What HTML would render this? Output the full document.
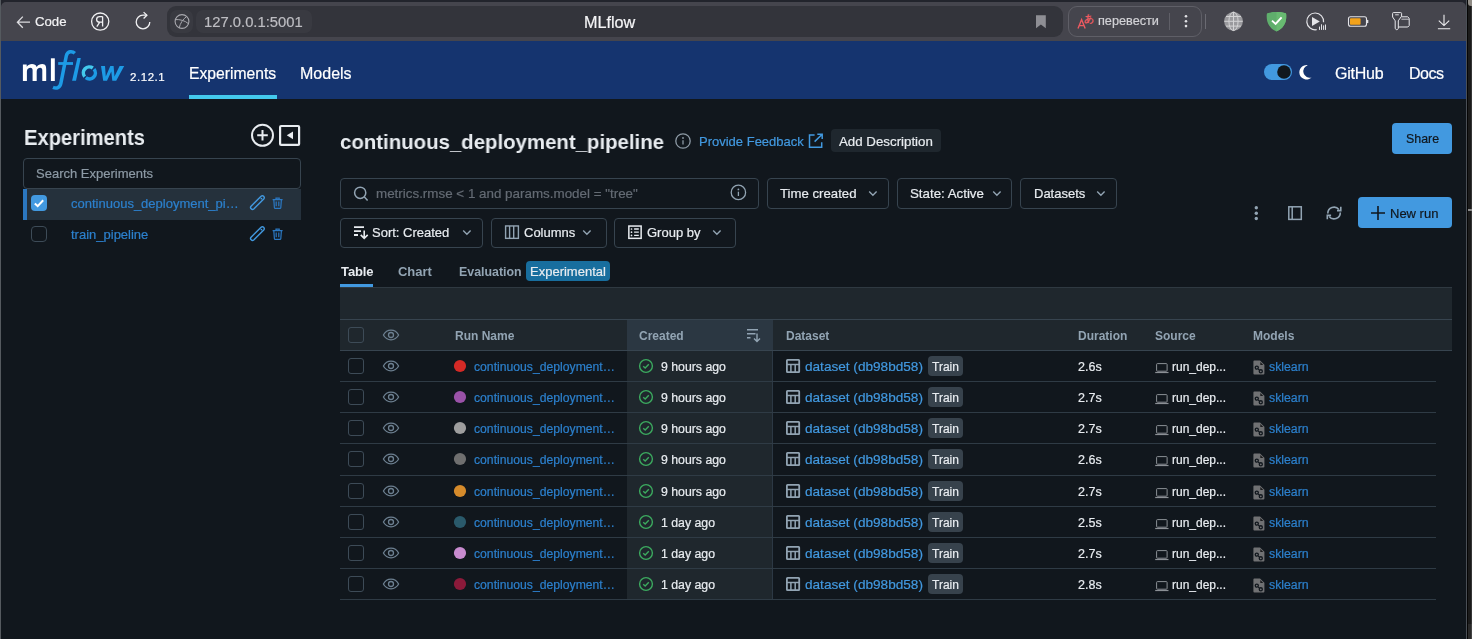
<!DOCTYPE html>
<html><head><meta charset="utf-8">
<style>
*{box-sizing:border-box;margin:0;padding:0}
html,body{width:1472px;height:639px;overflow:hidden;background:#11171d;font-family:"Liberation Sans",sans-serif}
.a{position:absolute}
.t{position:absolute;line-height:1;white-space:nowrap;will-change:transform}
svg.a{overflow:visible}
</style></head><body>
<div class="a" style="left:0px;top:0px;width:1472px;height:639px;background:#11171d"></div>
<div class="a" style="left:0px;top:0px;width:1467px;height:14px;background:#22242c"></div>
<div class="a" style="left:1467px;top:0px;width:5px;height:639px;background:#1b1b1b"></div>
<div class="a" style="left:1467px;top:0px;width:1px;height:639px;background:#060606"></div>
<div class="a" style="left:1471px;top:0px;width:1px;height:639px;background:#363636"></div>
<div class="a" style="left:1468px;top:209px;width:4px;height:2px;background:#8a8a8a"></div>
<div class="a" style="left:1468px;top:624px;width:3px;height:15px;background:#2a2a2a"></div>
<div class="a" style="left:1471px;top:624px;width:1px;height:15px;background:#444"></div>
<div class="a" style="left:1468px;top:0px;width:4px;height:6px;background:#8f8b85;border-bottom-left-radius:3px"></div>
<div class="a" style="left:1px;top:2px;width:1465px;height:39px;background:#45454d;border-top-left-radius:5px;border-top-right-radius:5px"></div>
<div class="a" style="left:1px;top:41px;width:1465px;height:58px;background:#15346f"></div>
<div class="a" style="left:0px;top:0px;width:1px;height:639px;background:#555a5f"></div>
<div class="a" style="left:1466px;top:0px;width:1px;height:639px;background:#4a4f56"></div>
<svg class="a" style="left:0px;top:0px;" width="170" height="41" viewBox="0 0 170 41">
<path d="M30 22.2H17.6M22.8 16.6L17.4 22.2L22.8 27.8" fill="none" stroke="#dcdce0" stroke-width="1.3"/>
<circle cx="100.2" cy="21.6" r="8.6" fill="none" stroke="#f0f0f2" stroke-width="1.3"/>
<path d="M102.6 16.6V26.6M102.6 16.6H99.8C97.6 16.6 96.6 17.9 96.6 19.4C96.6 20.9 97.6 22.1 99.8 22.1H102.6M99.8 22.1L96.8 26.6" fill="none" stroke="#f0f0f2" stroke-width="1.3"/>
<path d="M149.8 22A6.8 6.8 0 1 1 143 15.2H146.6" fill="none" stroke="#f0f0f2" stroke-width="1.3"/>
<path d="M143.6 12.1L146.9 15.2L143.6 18.5" fill="none" stroke="#f0f0f2" stroke-width="1.3"/>
</svg>
<div class="t" style="left:35.20px;top:15.03px;font-size:13.2px;color:#f2f2f4;-webkit-text-stroke:0.2px">Code</div>
<div class="a" style="left:167px;top:6px;width:896px;height:31px;background:#33343b;border-radius:9px"></div>
<div class="a" style="left:170px;top:10px;width:23px;height:23px;background:#393a41;border-radius:7px"></div>
<div class="a" style="left:196px;top:10px;width:116px;height:23px;background:#393a41;border-radius:7px"></div>
<svg class="a" style="left:0px;top:0px;" width="200" height="41" viewBox="0 0 200 41">
<circle cx="182" cy="21.5" r="6.9" fill="none" stroke="#a8a8ae" stroke-width="1.1"/>
<path d="M175.4 19.6C179.5 19.2 185 20.5 188.6 23.8M186.8 16.4C183 19 180 23.5 179.2 28" fill="none" stroke="#a8a8ae" stroke-width="1"/>
</svg>
<div class="t" style="left:204.00px;top:15.27px;font-size:14.8px;color:#bdbdc2;-webkit-text-stroke:0.2px">127.0.0.1:5001</div>
<div class="t" style="left:584.20px;top:14.09px;font-size:16.2px;color:#f4f4f6;-webkit-text-stroke:0.2px">MLflow</div>
<svg class="a" style="left:1030px;top:10px;" width="20" height="22" viewBox="0 0 20 22"><path d="M6 5.2H15.8V18.2L10.9 14.4L6 18.2Z" fill="#8e8e94"/></svg>
<div class="a" style="left:1068px;top:6px;width:134px;height:31px;border:1px solid #5f5f67;border-radius:9px"></div>
<svg class="a" style="left:1070px;top:8px;" width="30" height="28" viewBox="0 0 30 28">
<path d="M8 20.6L11.6 11.6L15.2 20.6M9.3 17.6H13.9" fill="none" stroke="#ec5a61" stroke-width="1.4"/>
<text x="14.4" y="14.2" font-size="9.5" font-family="Liberation Sans" font-weight="bold" fill="#ec5a61">あ</text>
</svg>
<div class="t" style="left:1097.50px;top:15.15px;font-size:12.7px;color:#d2d2d6;-webkit-text-stroke:0.2px">перевести</div>
<div class="a" style="left:1169px;top:13px;width:1px;height:17px;background:#5f5f67"></div>
<svg class="a" style="left:1180px;top:10px;" width="12" height="22" viewBox="0 0 12 22"><circle cx="6" cy="6.3" r="1.3" fill="#e0e0e4"/><circle cx="6" cy="11.2" r="1.3" fill="#e0e0e4"/><circle cx="6" cy="16.1" r="1.3" fill="#e0e0e4"/></svg>
<div class="a" style="left:1205px;top:14px;width:1px;height:15px;background:#6a6a72"></div>
<svg class="a" style="left:1220px;top:8px;" width="28" height="28" viewBox="0 0 28 28">
<circle cx="13.5" cy="13.3" r="9.4" fill="#9a9a9e"/>
<path d="M4.4 13.3H22.6M6 8.5H21M6 18.1H21M13.5 4V22.6" stroke="#d4d4d6" stroke-width="1" fill="none"/>
<ellipse cx="13.5" cy="13.3" rx="4.6" ry="9.3" fill="none" stroke="#d4d4d6" stroke-width="1"/>
</svg>
<svg class="a" style="left:1264px;top:9.8px;" width="26" height="26" viewBox="0 0 26 26">
<path d="M3.2 3.2C6.5 2.2 9.5 1.9 12.5 2C15.5 1.9 18.5 2.2 21.8 3.2C22.6 4 22.4 9.5 21.5 12C20 16.5 17 19.5 12.5 21.4C8 19.5 5 16.5 3.5 12C2.6 9.5 2.4 4 3.2 3.2Z" fill="#5fae6c"/>
<path d="M12.5 2C15.5 1.9 18.5 2.2 21.8 3.2C22.6 4 22.4 9.5 21.5 12C20 16.5 17 19.5 12.5 21.4Z" fill="#68ba71"/>
<path d="M8 10.6L11.6 13.9L17.6 7.4" fill="none" stroke="#fff" stroke-width="1.9"/>
</svg>
<svg class="a" style="left:1304px;top:9px;" width="26" height="26" viewBox="0 0 26 26">
<path d="M19.55 13.28A8.4 8.4 0 1 0 12.66 20.67" fill="none" stroke="#e4e4e8" stroke-width="1.2"/>
<path d="M8 8L15.8 12.5L8 17Z" fill="#e4e4e8"/>
<path d="M15.5 20.9V17.6M17.5 20.9V15.3M19.6 20.9V16.4M21.5 20.9V15.5" stroke="#e4e4e8" stroke-width="1"/>
</svg>
<svg class="a" style="left:1345px;top:13px;" width="28" height="18" viewBox="0 0 28 18">
<rect x="3.5" y="3.8" width="18" height="9.4" rx="2" fill="none" stroke="#e4e4e8" stroke-width="1.1"/>
<rect x="5" y="5.3" width="10.6" height="6.4" rx="0.8" fill="#f2a21b"/>
<path d="M22.5 6.9V10.1" stroke="#e4e4e8" stroke-width="1.6"/>
</svg>
<svg class="a" style="left:1390px;top:10px;" width="24" height="24" viewBox="0 0 24 24">
<path d="M3.4 2.6H10.7Q11.6 2.6 11.6 3.5V6.2L8.3 10.8V18.6L7.2 19.6H6.3L5.2 18.6V10.8L2.6 7V3.5Q2.6 2.6 3.4 2.6Z" fill="none" stroke="#eaeaee" stroke-width="1"/>
<path d="M5.2 4.8H8.8" stroke="#eaeaee" stroke-width="0.9"/>
<path d="M11.6 6.8H17.6L19.2 8.3V15.6L17.8 17H8.3" fill="none" stroke="#eaeaee" stroke-width="1"/>
<path d="M11.4 9.2H19.1" stroke="#c6c6ca" stroke-width="1"/>
</svg>
<svg class="a" style="left:1434px;top:10px;" width="20" height="22" viewBox="0 0 20 22">
<path d="M10 4.7V15.2M4.8 10.7L10 15.6L15.2 10.7M3.9 18.7H16.2" fill="none" stroke="#eeeef0" stroke-width="1.1"/>
</svg>
<svg class="a" style="left:20px;top:48px;" width="110" height="45" viewBox="0 0 110 45">
<path d="M2.9 33V16.5H6.7V18.7C8 17 9.8 16.1 12 16.1C14.3 16.1 15.9 17.1 16.7 18.9C18 17 20 16.1 22.3 16.1C25.9 16.1 26.2 19 26.2 21.5V33H22.3V22.3C22.3 20.5 21.6 19.7 20.2 19.7C18.3 19.7 16.7 20.9 16.7 23.4V33H12.6V22.3C12.6 20.5 11.9 19.7 10.5 19.7C8.6 19.7 6.9 20.9 6.9 23.4V33Z" fill="#fff"/>
<rect x="30.9" y="10.3" width="3.9" height="22.7" fill="#fff"/>
<path d="M54.8 5.2C52.5 3 47.6 2.6 46.3 7.8L40.9 35.2C40 39.8 36.5 40.8 33 39.3" fill="none" stroke="#1d9be6" stroke-width="3.5"/><path d="M38.2 15.5H53" stroke="#1d9be6" stroke-width="2.8"/>
<path d="M57.4 10L60.8 10L56 32.7L52.1 32.7Z" fill="#1d9be6"/>
<path d="M64.67 28.6A6 6 0 0 1 72.84 19.98" fill="none" stroke="#43c9ed" stroke-width="3.5"/>
<path d="M74 21.04A6 6 0 0 1 65.79 29.69" fill="none" stroke="#1d9be6" stroke-width="3.5"/>
<path d="M81 18H85L85.8 28.5L90.3 18H93.6L94.5 28.5L99.6 18H104.2L96.2 32.7H92.3L91.3 23.5L87 32.7H83.2Z" fill="#1d9be6"/>
</svg>
<div class="t" style="left:129.70px;top:72.27px;font-size:11.5px;color:#fff;-webkit-text-stroke:0.2px;letter-spacing:0.55px">2.12.1</div>
<div class="t" style="left:189.20px;top:66.41px;font-size:15.7px;color:#fff;-webkit-text-stroke:0.2px">Experiments</div>
<div class="a" style="left:189px;top:95px;width:88px;height:4px;background:#43c9ed"></div>
<div class="t" style="left:300.20px;top:66.16px;font-size:16px;color:#fff;-webkit-text-stroke:0.2px">Models</div>
<div class="a" style="left:1264px;top:64px;width:28px;height:16px;background:#4299e0;border-radius:8px"></div>
<svg class="a" style="left:1264px;top:64px;" width="28" height="16" viewBox="0 0 28 16"><circle cx="20" cy="8" r="6.8" fill="#11171d"/></svg>
<svg class="a" style="left:1296px;top:62px;" width="20" height="20" viewBox="0 0 20 20"><path d="M11.8 3.2A7.2 7.2 0 1 0 15.6 15.4A6 6 0 0 1 11.8 3.2Z" fill="#fff"/></svg>
<div class="t" style="left:1335.20px;top:66.16px;font-size:16px;color:#fff;-webkit-text-stroke:0.2px;letter-spacing:-0.25px">GitHub</div>
<div class="t" style="left:1408.50px;top:66.16px;font-size:16px;color:#fff;-webkit-text-stroke:0.2px;letter-spacing:-0.5px">Docs</div>
<div class="t" style="left:24.40px;top:126.98px;font-size:22px;color:#e8ecf0;transform:scaleX(0.916);transform-origin:0 0;font-weight:bold">Experiments</div>
<svg class="a" style="left:245px;top:118px;" width="60" height="36" viewBox="0 0 60 36">
<circle cx="17.5" cy="17.3" r="10.5" fill="none" stroke="#e8ecf0" stroke-width="2"/>
<path d="M17.5 12V22.6M12.2 17.3H22.8" stroke="#e8ecf0" stroke-width="2"/>
<rect x="35.1" y="8" width="19" height="18.9" rx="1" fill="none" stroke="#e8ecf0" stroke-width="2.2"/>
<path d="M48 13.4V21.2L41.8 17.3Z" fill="#e8ecf0"/>
</svg>
<div class="a" style="left:23px;top:158px;width:278px;height:31px;border:1px solid #37444f;border-radius:4px"></div>
<div class="t" style="left:36.30px;top:167.20px;font-size:13px;color:#8d9aa5;-webkit-text-stroke:0.2px">Search Experiments</div>
<div class="a" style="left:23px;top:189px;width:278px;height:31px;background:#25313c"></div>
<div class="a" style="left:23px;top:189px;width:4px;height:31px;background:#2b77c0"></div>
<div class="a" style="left:31px;top:195px;width:16px;height:16px;background:#4299e0;border-radius:4px"></div>
<svg class="a" style="left:31px;top:195px;" width="16" height="16" viewBox="0 0 16 16"><path d="M3.8 8.4L6.7 11.1L12.2 5.2" fill="none" stroke="#fff" stroke-width="2"/></svg>
<div class="t" style="left:70.60px;top:197.40px;font-size:13px;color:#2c80cd;-webkit-text-stroke:0.2px">continuous_deployment_pi…</div>
<div class="a" style="left:31px;top:226px;width:16px;height:16px;border:1px solid #3d4b57;border-radius:4px"></div>
<div class="t" style="left:70.60px;top:228.40px;font-size:13px;color:#2c80cd;-webkit-text-stroke:0.2px">train_pipeline</div>
<svg class="a" style="left:249px;top:194.5px;" width="16" height="16" viewBox="0 0 16 16"><path d="M4.74 13.94L14.74 3.94A1.9 1.9 0 0 0 12.06 1.26L2.06 11.26A1.9 1.9 0 0 0 4.74 13.94Z" fill="none" stroke="#4299e0" stroke-width="1.4"/><circle cx="12.4" cy="3.6" r="0.9" fill="#4299e0"/></svg>
<svg class="a" style="left:272px;top:197px;" width="12" height="12" viewBox="0 0 12 12"><path d="M0.6 2.6H10.6M4 2.6V1.2H7.2V2.6M1.8 2.6L2.4 10.6Q2.5 11.3 3.2 11.3H8Q8.7 11.3 8.8 10.6L9.4 2.6M4.2 4.6V9.2M6.8 4.6V9.2" fill="none" stroke="#2b78c2" stroke-width="1.2"/></svg>
<svg class="a" style="left:249px;top:225.5px;" width="16" height="16" viewBox="0 0 16 16"><path d="M4.74 13.94L14.74 3.94A1.9 1.9 0 0 0 12.06 1.26L2.06 11.26A1.9 1.9 0 0 0 4.74 13.94Z" fill="none" stroke="#4299e0" stroke-width="1.4"/><circle cx="12.4" cy="3.6" r="0.9" fill="#4299e0"/></svg>
<svg class="a" style="left:272px;top:228px;" width="12" height="12" viewBox="0 0 12 12"><path d="M0.6 2.6H10.6M4 2.6V1.2H7.2V2.6M1.8 2.6L2.4 10.6Q2.5 11.3 3.2 11.3H8Q8.7 11.3 8.8 10.6L9.4 2.6M4.2 4.6V9.2M6.8 4.6V9.2" fill="none" stroke="#2b78c2" stroke-width="1.2"/></svg>
<div class="t" style="left:340.40px;top:130.62px;font-size:21px;color:#e8ecf0;transform:scaleX(0.971);transform-origin:0 0;font-weight:bold">continuous_deployment_pipeline</div>
<svg class="a" style="left:670px;top:130px;" width="26" height="24" viewBox="0 0 26 24"><circle cx="13" cy="11" r="7.2" fill="none" stroke="#8d9aa5" stroke-width="1.3"/><circle cx="13" cy="7.98" r="0.9" fill="#8d9aa5"/><path d="M13 10.28V14.60" stroke="#8d9aa5" stroke-width="1.3"/></svg>
<div class="t" style="left:698.80px;top:134.60px;font-size:13px;color:#4299e0;-webkit-text-stroke:0.2px">Provide Feedback</div>
<svg class="a" style="left:806px;top:132px;" width="20" height="18" viewBox="0 0 20 18"><path d="M8.6 3H3.5V15.2H15.7V10.2" fill="none" stroke="#4299e0" stroke-width="1.5"/><path d="M8.6 9.6L16.2 2.2M11.3 2.2H16.2V7.1" fill="none" stroke="#4299e0" stroke-width="1.5"/></svg>
<div class="a" style="left:831px;top:129px;width:110px;height:23px;background:#1f272e;border-radius:4px"></div>
<div class="t" style="left:839.30px;top:135.34px;font-size:13.3px;color:#e8ecf0;-webkit-text-stroke:0.2px">Add Description</div>
<div class="a" style="left:1392px;top:123px;width:60px;height:31px;background:#4299e0;border-radius:4px"></div>
<div class="t" style="left:1405.70px;top:132.90px;font-size:12.4px;color:#11171d;-webkit-text-stroke:0.2px">Share</div>
<div class="a" style="left:340px;top:178px;width:419px;height:31px;border:1px solid #37444f;border-radius:4px"></div>
<svg class="a" style="left:350px;top:183px;" width="22" height="22" viewBox="0 0 22 22"><circle cx="10.2" cy="9.8" r="5.6" fill="none" stroke="#92a4b3" stroke-width="1.5"/><path d="M14.2 13.8L17.6 17.4" stroke="#92a4b3" stroke-width="1.5"/></svg>
<div class="t" style="left:376.40px;top:186.56px;font-size:13.4px;color:#646b74;-webkit-text-stroke:0.2px">metrics.rmse &lt; 1 and params.model = "tree"</div>
<svg class="a" style="left:726px;top:180px;" width="26" height="26" viewBox="0 0 26 26"><circle cx="12.4" cy="12.4" r="7.2" fill="none" stroke="#92a4b3" stroke-width="1.3"/><circle cx="12.4" cy="9.38" r="0.9" fill="#92a4b3"/><path d="M12.4 11.68V16.00" stroke="#92a4b3" stroke-width="1.3"/></svg>
<div class="a" style="left:767px;top:178px;width:122px;height:31px;border:1px solid #37444f;border-radius:4px"></div>
<div class="t" style="left:780.10px;top:186.63px;font-size:13.2px;color:#e8ecf0;-webkit-text-stroke:0.2px">Time created</div>
<svg class="a" style="left:868.0px;top:189.5px;" width="10" height="8" viewBox="0 0 10 8"><path d="M1.2 1.6L4.9 5.2L8.6 1.6" fill="none" stroke="#92a4b3" stroke-width="1.4"/></svg>
<div class="a" style="left:897px;top:178px;width:115px;height:31px;border:1px solid #37444f;border-radius:4px"></div>
<div class="t" style="left:909.60px;top:186.54px;font-size:13.3px;color:#e8ecf0;-webkit-text-stroke:0.2px">State: Active</div>
<svg class="a" style="left:991.9px;top:189.5px;" width="10" height="8" viewBox="0 0 10 8"><path d="M1.2 1.6L4.9 5.2L8.6 1.6" fill="none" stroke="#92a4b3" stroke-width="1.4"/></svg>
<div class="a" style="left:1020px;top:178px;width:97px;height:31px;border:1px solid #37444f;border-radius:4px"></div>
<div class="t" style="left:1033.50px;top:186.80px;font-size:13px;color:#e8ecf0;-webkit-text-stroke:0.2px">Datasets</div>
<svg class="a" style="left:1096.3000000000002px;top:189.5px;" width="10" height="8" viewBox="0 0 10 8"><path d="M1.2 1.6L4.9 5.2L8.6 1.6" fill="none" stroke="#92a4b3" stroke-width="1.4"/></svg>
<div class="a" style="left:340px;top:218px;width:143px;height:30px;border:1px solid #37444f;border-radius:4px"></div>
<div class="t" style="left:372.40px;top:225.60px;font-size:13px;color:#e8ecf0;-webkit-text-stroke:0.2px">Sort: Created</div>
<svg class="a" style="left:462.09999999999997px;top:229.2px;" width="10" height="8" viewBox="0 0 10 8"><path d="M1.2 1.6L4.9 5.2L8.6 1.6" fill="none" stroke="#92a4b3" stroke-width="1.4"/></svg>
<div class="a" style="left:491px;top:218px;width:116px;height:30px;border:1px solid #37444f;border-radius:4px"></div>
<div class="t" style="left:523.80px;top:225.60px;font-size:13px;color:#e8ecf0;-webkit-text-stroke:0.2px">Columns</div>
<svg class="a" style="left:582.1px;top:229.2px;" width="10" height="8" viewBox="0 0 10 8"><path d="M1.2 1.6L4.9 5.2L8.6 1.6" fill="none" stroke="#92a4b3" stroke-width="1.4"/></svg>
<div class="a" style="left:614px;top:218px;width:122px;height:30px;border:1px solid #37444f;border-radius:4px"></div>
<div class="t" style="left:647.00px;top:225.60px;font-size:13px;color:#e8ecf0;-webkit-text-stroke:0.2px">Group by</div>
<svg class="a" style="left:711.9px;top:229.2px;" width="10" height="8" viewBox="0 0 10 8"><path d="M1.2 1.6L4.9 5.2L8.6 1.6" fill="none" stroke="#92a4b3" stroke-width="1.4"/></svg>
<svg class="a" style="left:352px;top:224px;" width="18" height="18" viewBox="0 0 18 18"><path d="M2 3.1H12M2 7.1H9M2 11H6" stroke="#e8ecf0" stroke-width="1.9"/><path d="M12.2 6.4V14.4M8.7 10.9L12.2 14.4L15.7 10.9" fill="none" stroke="#e8ecf0" stroke-width="1.6"/></svg>
<svg class="a" style="left:503px;top:224px;" width="18" height="18" viewBox="0 0 18 18"><rect x="2.6" y="1.95" width="12.8" height="12.4" fill="none" stroke="#92a4b3" stroke-width="1.4"/><path d="M6.6 1.95V14.35M10.7 1.95V14.35" stroke="#92a4b3" stroke-width="1.4"/></svg>
<svg class="a" style="left:626px;top:223px;" width="18" height="18" viewBox="0 0 18 18"><rect x="2.85" y="3.05" width="12.3" height="12.3" fill="none" stroke="#e8ecf0" stroke-width="1.5"/><circle cx="5.5" cy="6" r="0.85" fill="#e8ecf0"/><circle cx="5.5" cy="9.2" r="0.85" fill="#e8ecf0"/><circle cx="5.5" cy="12.4" r="0.85" fill="#e8ecf0"/><path d="M8.1 6H12.8M8.1 9.2H12.8M8.1 12.4H12.8" stroke="#e8ecf0" stroke-width="1.3"/></svg>
<svg class="a" style="left:1250px;top:203px;" width="40" height="20" viewBox="0 0 40 20"><circle cx="6.3" cy="4.8" r="1.7" fill="#92a4b3"/><circle cx="6.3" cy="10.2" r="1.7" fill="#92a4b3"/><circle cx="6.3" cy="15.5" r="1.7" fill="#92a4b3"/></svg>
<svg class="a" style="left:1285px;top:203px;" width="20" height="20" viewBox="0 0 20 20"><rect x="3.8" y="3.8" width="12.5" height="12.6" fill="none" stroke="#92a4b3" stroke-width="1.5"/><path d="M7.2 3.8V16.4" stroke="#92a4b3" stroke-width="1.5"/></svg>
<svg class="a" style="left:1324px;top:203px;" width="20" height="20" viewBox="0 0 20 20"><path d="M3.8 10.5A6.2 6.2 0 0 1 14.9 6.6M16.3 9.5A6.2 6.2 0 0 1 5.2 13.4" fill="none" stroke="#92a4b3" stroke-width="1.6"/><path d="M16.8 3.8V7.6H13" fill="none" stroke="#92a4b3" stroke-width="1.6"/><path d="M3.3 16.2V12.4H7.1" fill="none" stroke="#92a4b3" stroke-width="1.6"/></svg>
<div class="a" style="left:1358px;top:197px;width:94px;height:31px;background:#4299e0;border-radius:4px"></div>
<svg class="a" style="left:1368px;top:203px;" width="20" height="20" viewBox="0 0 20 20"><path d="M10 3V17M3 10H17" stroke="#11171d" stroke-width="1.6"/></svg>
<div class="t" style="left:1390.20px;top:207.30px;font-size:13px;color:#11171d;-webkit-text-stroke:0.2px">New run</div>
<div class="t" style="left:340.90px;top:264.60px;font-size:13px;color:#e8ecf0;font-weight:bold;letter-spacing:-0.1px">Table</div>
<div class="t" style="left:398.40px;top:264.60px;font-size:13px;color:#92a4b3;font-weight:bold;letter-spacing:-0.05px">Chart</div>
<div class="t" style="left:458.70px;top:266.10px;font-size:12.4px;color:#92a4b3;font-weight:bold">Evaluation</div>
<div class="a" style="left:526px;top:261px;width:84px;height:20px;background:#186e9e;border-radius:4px"></div>
<div class="t" style="left:530.00px;top:264.60px;font-size:13px;color:#e8ecf0;-webkit-text-stroke:0.2px">Experimental</div>
<div class="a" style="left:340px;top:287px;width:1112px;height:1px;background:#2f3941"></div>
<div class="a" style="left:340px;top:284px;width:33px;height:3px;background:#4299e0"></div>
<div class="a" style="left:340px;top:288px;width:1112px;height:63px;background:#1f272d"></div>
<div class="a" style="left:340px;top:319px;width:1112px;height:1px;background:#37444f"></div>
<div class="a" style="left:627px;top:320px;width:146px;height:30px;background:#2b3742"></div>
<div class="a" style="left:340px;top:350px;width:1112px;height:1px;background:#37444f"></div>
<div class="a" style="left:627px;top:351px;width:145px;height:249px;background:#1f272d"></div>
<div class="a" style="left:772px;top:351px;width:1px;height:249px;background:#2c3844"></div>
<div class="a" style="left:348px;top:327px;width:16px;height:16px;border:1px solid #3d4b57;border-radius:3px"></div>
<svg class="a" style="left:381px;top:328px;" width="20" height="14" viewBox="0 0 20 14"><path d="M2.4 7C4.3 3.5 6.9 2.2 10 2.2C13.1 2.2 15.7 3.5 17.6 7C15.7 10.5 13.1 11.8 10 11.8C6.9 11.8 4.3 10.5 2.4 7Z" fill="none" stroke="#6d8091" stroke-width="1.3" stroke-linejoin="round"/><circle cx="10" cy="7" r="2.5" fill="none" stroke="#6d8091" stroke-width="1.3"/></svg>
<div class="t" style="left:454.60px;top:329.84px;font-size:12px;color:#92a4b3;font-weight:bold">Run Name</div>
<div class="t" style="left:639.40px;top:329.64px;font-size:12px;color:#92a4b3;font-weight:bold">Created</div>
<svg class="a" style="left:744px;top:326px;" width="20" height="18" viewBox="0 0 20 18"><path d="M3 3.8H14M3 7.8H11.5M3 11.8H6.5" stroke="#92a4b3" stroke-width="1.4"/><path d="M13 7.5V15.5M10 12.6L13 15.6L16 12.6" fill="none" stroke="#92a4b3" stroke-width="1.4"/></svg>
<div class="t" style="left:785.70px;top:329.84px;font-size:12px;color:#92a4b3;font-weight:bold">Dataset</div>
<div class="t" style="left:1077.60px;top:329.84px;font-size:12px;color:#92a4b3;font-weight:bold">Duration</div>
<div class="t" style="left:1155.40px;top:329.84px;font-size:12px;color:#92a4b3;font-weight:bold">Source</div>
<div class="t" style="left:1252.60px;top:329.84px;font-size:12px;color:#92a4b3;font-weight:bold">Models</div>
<div class="a" style="left:340px;top:381px;width:1096px;height:1px;background:#2f3b45"></div>
<div class="a" style="left:348px;top:358px;width:16px;height:16px;border:1px solid #3d4b57;border-radius:3px"></div>
<svg class="a" style="left:381px;top:359px;" width="20" height="14" viewBox="0 0 20 14"><path d="M2.4 7C4.3 3.5 6.9 2.2 10 2.2C13.1 2.2 15.7 3.5 17.6 7C15.7 10.5 13.1 11.8 10 11.8C6.9 11.8 4.3 10.5 2.4 7Z" fill="none" stroke="#6d8091" stroke-width="1.3" stroke-linejoin="round"/><circle cx="10" cy="7" r="2.5" fill="none" stroke="#6d8091" stroke-width="1.3"/></svg>
<svg class="a" style="left:452px;top:358px;" width="16" height="16" viewBox="0 0 16 16"><circle cx="8" cy="8" r="6.1" fill="#d42a26"/></svg>
<div class="t" style="left:474.10px;top:360.97px;font-size:12.2px;color:#2c80cd;-webkit-text-stroke:0.2px">continuous_deployment…</div>
<svg class="a" style="left:636px;top:356px;" width="20" height="20" viewBox="0 0 20 20"><circle cx="10" cy="10" r="6.4" fill="none" stroke="#3caa5f" stroke-width="1.4"/><path d="M7.2 10.2L9.2 12L12.8 8.3" fill="none" stroke="#3caa5f" stroke-width="1.4"/></svg>
<div class="t" style="left:660.70px;top:360.89px;font-size:12.3px;color:#e8ecf0;-webkit-text-stroke:0.2px">9 hours ago</div>
<svg class="a" style="left:783px;top:356px;" width="20" height="20" viewBox="0 0 20 20"><rect x="3.9" y="3.9" width="12.3" height="12.3" rx="0.6" fill="none" stroke="#92a4b3" stroke-width="1.8"/><path d="M3.9 8.4H16.2M7.9 8.4V16.2M12.2 8.4V16.2" stroke="#92a4b3" stroke-width="1.5"/></svg>
<div class="t" style="left:804.90px;top:359.79px;font-size:13.6px;color:#4299e0;-webkit-text-stroke:0.2px">dataset (db98bd58)</div>
<div class="a" style="left:928px;top:356px;width:35px;height:20px;background:#37424c;border-radius:4px"></div>
<div class="t" style="left:932.30px;top:361.14px;font-size:12px;color:#e8ecf0;-webkit-text-stroke:0.2px">Train</div>
<div class="t" style="left:1077.60px;top:360.72px;font-size:12.5px;color:#e8ecf0;-webkit-text-stroke:0.2px">2.6s</div>
<svg class="a" style="left:1152px;top:359px;" width="20" height="16" viewBox="0 0 20 16"><rect x="4.6" y="4.6" width="10.5" height="7.6" rx="0.8" fill="none" stroke="#8b9095" stroke-width="1"/><path d="M3.2 13.5H16.5" stroke="#8b9095" stroke-width="1.2"/></svg>
<div class="t" style="left:1172.40px;top:361.14px;font-size:12px;color:#e8ecf0;-webkit-text-stroke:0.2px">run_dep...</div>
<svg class="a" style="left:1250px;top:358px;" width="18" height="18" viewBox="0 0 18 18"><path d="M3.4 2.4H10L14.4 6.8V15.6Q14.4 16.6 13.4 16.6H4.4Q3.4 16.6 3.4 15.6V3.4Q3.4 2.4 4.4 2.4Z" fill="#707173"/><path d="M10.3 4V7H13.3Z" fill="#1a1b1d"/><circle cx="6.8" cy="9.6" r="1.55" fill="none" stroke="#11171d" stroke-width="1.3"/><circle cx="10.8" cy="13.3" r="1.55" fill="none" stroke="#11171d" stroke-width="1.3"/><path d="M8.2 11L9.4 12" stroke="#11171d" stroke-width="1.1"/></svg>
<div class="t" style="left:1269.00px;top:360.89px;font-size:12.3px;color:#2c80cd;-webkit-text-stroke:0.2px">sklearn</div>
<div class="a" style="left:340px;top:412px;width:1096px;height:1px;background:#2f3b45"></div>
<div class="a" style="left:348px;top:389px;width:16px;height:16px;border:1px solid #3d4b57;border-radius:3px"></div>
<svg class="a" style="left:381px;top:390px;" width="20" height="14" viewBox="0 0 20 14"><path d="M2.4 7C4.3 3.5 6.9 2.2 10 2.2C13.1 2.2 15.7 3.5 17.6 7C15.7 10.5 13.1 11.8 10 11.8C6.9 11.8 4.3 10.5 2.4 7Z" fill="none" stroke="#6d8091" stroke-width="1.3" stroke-linejoin="round"/><circle cx="10" cy="7" r="2.5" fill="none" stroke="#6d8091" stroke-width="1.3"/></svg>
<svg class="a" style="left:452px;top:389px;" width="16" height="16" viewBox="0 0 16 16"><circle cx="8" cy="8" r="6.1" fill="#9a52a8"/></svg>
<div class="t" style="left:474.10px;top:391.97px;font-size:12.2px;color:#2c80cd;-webkit-text-stroke:0.2px">continuous_deployment…</div>
<svg class="a" style="left:636px;top:387px;" width="20" height="20" viewBox="0 0 20 20"><circle cx="10" cy="10" r="6.4" fill="none" stroke="#3caa5f" stroke-width="1.4"/><path d="M7.2 10.2L9.2 12L12.8 8.3" fill="none" stroke="#3caa5f" stroke-width="1.4"/></svg>
<div class="t" style="left:660.70px;top:391.89px;font-size:12.3px;color:#e8ecf0;-webkit-text-stroke:0.2px">9 hours ago</div>
<svg class="a" style="left:783px;top:387px;" width="20" height="20" viewBox="0 0 20 20"><rect x="3.9" y="3.9" width="12.3" height="12.3" rx="0.6" fill="none" stroke="#92a4b3" stroke-width="1.8"/><path d="M3.9 8.4H16.2M7.9 8.4V16.2M12.2 8.4V16.2" stroke="#92a4b3" stroke-width="1.5"/></svg>
<div class="t" style="left:804.90px;top:390.79px;font-size:13.6px;color:#4299e0;-webkit-text-stroke:0.2px">dataset (db98bd58)</div>
<div class="a" style="left:928px;top:387px;width:35px;height:20px;background:#37424c;border-radius:4px"></div>
<div class="t" style="left:932.30px;top:392.14px;font-size:12px;color:#e8ecf0;-webkit-text-stroke:0.2px">Train</div>
<div class="t" style="left:1077.60px;top:391.72px;font-size:12.5px;color:#e8ecf0;-webkit-text-stroke:0.2px">2.7s</div>
<svg class="a" style="left:1152px;top:390px;" width="20" height="16" viewBox="0 0 20 16"><rect x="4.6" y="4.6" width="10.5" height="7.6" rx="0.8" fill="none" stroke="#8b9095" stroke-width="1"/><path d="M3.2 13.5H16.5" stroke="#8b9095" stroke-width="1.2"/></svg>
<div class="t" style="left:1172.40px;top:392.14px;font-size:12px;color:#e8ecf0;-webkit-text-stroke:0.2px">run_dep...</div>
<svg class="a" style="left:1250px;top:389px;" width="18" height="18" viewBox="0 0 18 18"><path d="M3.4 2.4H10L14.4 6.8V15.6Q14.4 16.6 13.4 16.6H4.4Q3.4 16.6 3.4 15.6V3.4Q3.4 2.4 4.4 2.4Z" fill="#707173"/><path d="M10.3 4V7H13.3Z" fill="#1a1b1d"/><circle cx="6.8" cy="9.6" r="1.55" fill="none" stroke="#11171d" stroke-width="1.3"/><circle cx="10.8" cy="13.3" r="1.55" fill="none" stroke="#11171d" stroke-width="1.3"/><path d="M8.2 11L9.4 12" stroke="#11171d" stroke-width="1.1"/></svg>
<div class="t" style="left:1269.00px;top:391.89px;font-size:12.3px;color:#2c80cd;-webkit-text-stroke:0.2px">sklearn</div>
<div class="a" style="left:340px;top:443px;width:1096px;height:1px;background:#2f3b45"></div>
<div class="a" style="left:348px;top:420px;width:16px;height:16px;border:1px solid #3d4b57;border-radius:3px"></div>
<svg class="a" style="left:381px;top:421px;" width="20" height="14" viewBox="0 0 20 14"><path d="M2.4 7C4.3 3.5 6.9 2.2 10 2.2C13.1 2.2 15.7 3.5 17.6 7C15.7 10.5 13.1 11.8 10 11.8C6.9 11.8 4.3 10.5 2.4 7Z" fill="none" stroke="#6d8091" stroke-width="1.3" stroke-linejoin="round"/><circle cx="10" cy="7" r="2.5" fill="none" stroke="#6d8091" stroke-width="1.3"/></svg>
<svg class="a" style="left:452px;top:420px;" width="16" height="16" viewBox="0 0 16 16"><circle cx="8" cy="8" r="6.1" fill="#9e9e9e"/></svg>
<div class="t" style="left:474.10px;top:422.97px;font-size:12.2px;color:#2c80cd;-webkit-text-stroke:0.2px">continuous_deployment…</div>
<svg class="a" style="left:636px;top:418px;" width="20" height="20" viewBox="0 0 20 20"><circle cx="10" cy="10" r="6.4" fill="none" stroke="#3caa5f" stroke-width="1.4"/><path d="M7.2 10.2L9.2 12L12.8 8.3" fill="none" stroke="#3caa5f" stroke-width="1.4"/></svg>
<div class="t" style="left:660.70px;top:422.89px;font-size:12.3px;color:#e8ecf0;-webkit-text-stroke:0.2px">9 hours ago</div>
<svg class="a" style="left:783px;top:418px;" width="20" height="20" viewBox="0 0 20 20"><rect x="3.9" y="3.9" width="12.3" height="12.3" rx="0.6" fill="none" stroke="#92a4b3" stroke-width="1.8"/><path d="M3.9 8.4H16.2M7.9 8.4V16.2M12.2 8.4V16.2" stroke="#92a4b3" stroke-width="1.5"/></svg>
<div class="t" style="left:804.90px;top:421.79px;font-size:13.6px;color:#4299e0;-webkit-text-stroke:0.2px">dataset (db98bd58)</div>
<div class="a" style="left:928px;top:418px;width:35px;height:20px;background:#37424c;border-radius:4px"></div>
<div class="t" style="left:932.30px;top:423.14px;font-size:12px;color:#e8ecf0;-webkit-text-stroke:0.2px">Train</div>
<div class="t" style="left:1077.60px;top:422.72px;font-size:12.5px;color:#e8ecf0;-webkit-text-stroke:0.2px">2.7s</div>
<svg class="a" style="left:1152px;top:421px;" width="20" height="16" viewBox="0 0 20 16"><rect x="4.6" y="4.6" width="10.5" height="7.6" rx="0.8" fill="none" stroke="#8b9095" stroke-width="1"/><path d="M3.2 13.5H16.5" stroke="#8b9095" stroke-width="1.2"/></svg>
<div class="t" style="left:1172.40px;top:423.14px;font-size:12px;color:#e8ecf0;-webkit-text-stroke:0.2px">run_dep...</div>
<svg class="a" style="left:1250px;top:420px;" width="18" height="18" viewBox="0 0 18 18"><path d="M3.4 2.4H10L14.4 6.8V15.6Q14.4 16.6 13.4 16.6H4.4Q3.4 16.6 3.4 15.6V3.4Q3.4 2.4 4.4 2.4Z" fill="#707173"/><path d="M10.3 4V7H13.3Z" fill="#1a1b1d"/><circle cx="6.8" cy="9.6" r="1.55" fill="none" stroke="#11171d" stroke-width="1.3"/><circle cx="10.8" cy="13.3" r="1.55" fill="none" stroke="#11171d" stroke-width="1.3"/><path d="M8.2 11L9.4 12" stroke="#11171d" stroke-width="1.1"/></svg>
<div class="t" style="left:1269.00px;top:422.89px;font-size:12.3px;color:#2c80cd;-webkit-text-stroke:0.2px">sklearn</div>
<div class="a" style="left:340px;top:475px;width:1096px;height:1px;background:#2f3b45"></div>
<div class="a" style="left:348px;top:451px;width:16px;height:16px;border:1px solid #3d4b57;border-radius:3px"></div>
<svg class="a" style="left:381px;top:452px;" width="20" height="14" viewBox="0 0 20 14"><path d="M2.4 7C4.3 3.5 6.9 2.2 10 2.2C13.1 2.2 15.7 3.5 17.6 7C15.7 10.5 13.1 11.8 10 11.8C6.9 11.8 4.3 10.5 2.4 7Z" fill="none" stroke="#6d8091" stroke-width="1.3" stroke-linejoin="round"/><circle cx="10" cy="7" r="2.5" fill="none" stroke="#6d8091" stroke-width="1.3"/></svg>
<svg class="a" style="left:452px;top:451px;" width="16" height="16" viewBox="0 0 16 16"><circle cx="8" cy="8" r="6.1" fill="#6f6f6f"/></svg>
<div class="t" style="left:474.10px;top:453.97px;font-size:12.2px;color:#2c80cd;-webkit-text-stroke:0.2px">continuous_deployment…</div>
<svg class="a" style="left:636px;top:449px;" width="20" height="20" viewBox="0 0 20 20"><circle cx="10" cy="10" r="6.4" fill="none" stroke="#3caa5f" stroke-width="1.4"/><path d="M7.2 10.2L9.2 12L12.8 8.3" fill="none" stroke="#3caa5f" stroke-width="1.4"/></svg>
<div class="t" style="left:660.70px;top:453.89px;font-size:12.3px;color:#e8ecf0;-webkit-text-stroke:0.2px">9 hours ago</div>
<svg class="a" style="left:783px;top:449px;" width="20" height="20" viewBox="0 0 20 20"><rect x="3.9" y="3.9" width="12.3" height="12.3" rx="0.6" fill="none" stroke="#92a4b3" stroke-width="1.8"/><path d="M3.9 8.4H16.2M7.9 8.4V16.2M12.2 8.4V16.2" stroke="#92a4b3" stroke-width="1.5"/></svg>
<div class="t" style="left:804.90px;top:452.79px;font-size:13.6px;color:#4299e0;-webkit-text-stroke:0.2px">dataset (db98bd58)</div>
<div class="a" style="left:928px;top:449px;width:35px;height:20px;background:#37424c;border-radius:4px"></div>
<div class="t" style="left:932.30px;top:454.14px;font-size:12px;color:#e8ecf0;-webkit-text-stroke:0.2px">Train</div>
<div class="t" style="left:1077.60px;top:453.72px;font-size:12.5px;color:#e8ecf0;-webkit-text-stroke:0.2px">2.6s</div>
<svg class="a" style="left:1152px;top:452px;" width="20" height="16" viewBox="0 0 20 16"><rect x="4.6" y="4.6" width="10.5" height="7.6" rx="0.8" fill="none" stroke="#8b9095" stroke-width="1"/><path d="M3.2 13.5H16.5" stroke="#8b9095" stroke-width="1.2"/></svg>
<div class="t" style="left:1172.40px;top:454.14px;font-size:12px;color:#e8ecf0;-webkit-text-stroke:0.2px">run_dep...</div>
<svg class="a" style="left:1250px;top:451px;" width="18" height="18" viewBox="0 0 18 18"><path d="M3.4 2.4H10L14.4 6.8V15.6Q14.4 16.6 13.4 16.6H4.4Q3.4 16.6 3.4 15.6V3.4Q3.4 2.4 4.4 2.4Z" fill="#707173"/><path d="M10.3 4V7H13.3Z" fill="#1a1b1d"/><circle cx="6.8" cy="9.6" r="1.55" fill="none" stroke="#11171d" stroke-width="1.3"/><circle cx="10.8" cy="13.3" r="1.55" fill="none" stroke="#11171d" stroke-width="1.3"/><path d="M8.2 11L9.4 12" stroke="#11171d" stroke-width="1.1"/></svg>
<div class="t" style="left:1269.00px;top:453.89px;font-size:12.3px;color:#2c80cd;-webkit-text-stroke:0.2px">sklearn</div>
<div class="a" style="left:340px;top:506px;width:1096px;height:1px;background:#2f3b45"></div>
<div class="a" style="left:348px;top:483px;width:16px;height:16px;border:1px solid #3d4b57;border-radius:3px"></div>
<svg class="a" style="left:381px;top:484px;" width="20" height="14" viewBox="0 0 20 14"><path d="M2.4 7C4.3 3.5 6.9 2.2 10 2.2C13.1 2.2 15.7 3.5 17.6 7C15.7 10.5 13.1 11.8 10 11.8C6.9 11.8 4.3 10.5 2.4 7Z" fill="none" stroke="#6d8091" stroke-width="1.3" stroke-linejoin="round"/><circle cx="10" cy="7" r="2.5" fill="none" stroke="#6d8091" stroke-width="1.3"/></svg>
<svg class="a" style="left:452px;top:483px;" width="16" height="16" viewBox="0 0 16 16"><circle cx="8" cy="8" r="6.1" fill="#d68b2b"/></svg>
<div class="t" style="left:474.10px;top:485.97px;font-size:12.2px;color:#2c80cd;-webkit-text-stroke:0.2px">continuous_deployment…</div>
<svg class="a" style="left:636px;top:481px;" width="20" height="20" viewBox="0 0 20 20"><circle cx="10" cy="10" r="6.4" fill="none" stroke="#3caa5f" stroke-width="1.4"/><path d="M7.2 10.2L9.2 12L12.8 8.3" fill="none" stroke="#3caa5f" stroke-width="1.4"/></svg>
<div class="t" style="left:660.70px;top:485.89px;font-size:12.3px;color:#e8ecf0;-webkit-text-stroke:0.2px">9 hours ago</div>
<svg class="a" style="left:783px;top:481px;" width="20" height="20" viewBox="0 0 20 20"><rect x="3.9" y="3.9" width="12.3" height="12.3" rx="0.6" fill="none" stroke="#92a4b3" stroke-width="1.8"/><path d="M3.9 8.4H16.2M7.9 8.4V16.2M12.2 8.4V16.2" stroke="#92a4b3" stroke-width="1.5"/></svg>
<div class="t" style="left:804.90px;top:484.79px;font-size:13.6px;color:#4299e0;-webkit-text-stroke:0.2px">dataset (db98bd58)</div>
<div class="a" style="left:928px;top:481px;width:35px;height:20px;background:#37424c;border-radius:4px"></div>
<div class="t" style="left:932.30px;top:486.14px;font-size:12px;color:#e8ecf0;-webkit-text-stroke:0.2px">Train</div>
<div class="t" style="left:1077.60px;top:485.72px;font-size:12.5px;color:#e8ecf0;-webkit-text-stroke:0.2px">2.7s</div>
<svg class="a" style="left:1152px;top:484px;" width="20" height="16" viewBox="0 0 20 16"><rect x="4.6" y="4.6" width="10.5" height="7.6" rx="0.8" fill="none" stroke="#8b9095" stroke-width="1"/><path d="M3.2 13.5H16.5" stroke="#8b9095" stroke-width="1.2"/></svg>
<div class="t" style="left:1172.40px;top:486.14px;font-size:12px;color:#e8ecf0;-webkit-text-stroke:0.2px">run_dep...</div>
<svg class="a" style="left:1250px;top:483px;" width="18" height="18" viewBox="0 0 18 18"><path d="M3.4 2.4H10L14.4 6.8V15.6Q14.4 16.6 13.4 16.6H4.4Q3.4 16.6 3.4 15.6V3.4Q3.4 2.4 4.4 2.4Z" fill="#707173"/><path d="M10.3 4V7H13.3Z" fill="#1a1b1d"/><circle cx="6.8" cy="9.6" r="1.55" fill="none" stroke="#11171d" stroke-width="1.3"/><circle cx="10.8" cy="13.3" r="1.55" fill="none" stroke="#11171d" stroke-width="1.3"/><path d="M8.2 11L9.4 12" stroke="#11171d" stroke-width="1.1"/></svg>
<div class="t" style="left:1269.00px;top:485.89px;font-size:12.3px;color:#2c80cd;-webkit-text-stroke:0.2px">sklearn</div>
<div class="a" style="left:340px;top:537px;width:1096px;height:1px;background:#2f3b45"></div>
<div class="a" style="left:348px;top:514px;width:16px;height:16px;border:1px solid #3d4b57;border-radius:3px"></div>
<svg class="a" style="left:381px;top:515px;" width="20" height="14" viewBox="0 0 20 14"><path d="M2.4 7C4.3 3.5 6.9 2.2 10 2.2C13.1 2.2 15.7 3.5 17.6 7C15.7 10.5 13.1 11.8 10 11.8C6.9 11.8 4.3 10.5 2.4 7Z" fill="none" stroke="#6d8091" stroke-width="1.3" stroke-linejoin="round"/><circle cx="10" cy="7" r="2.5" fill="none" stroke="#6d8091" stroke-width="1.3"/></svg>
<svg class="a" style="left:452px;top:514px;" width="16" height="16" viewBox="0 0 16 16"><circle cx="8" cy="8" r="6.1" fill="#2a5a6b"/></svg>
<div class="t" style="left:474.10px;top:516.97px;font-size:12.2px;color:#2c80cd;-webkit-text-stroke:0.2px">continuous_deployment…</div>
<svg class="a" style="left:636px;top:512px;" width="20" height="20" viewBox="0 0 20 20"><circle cx="10" cy="10" r="6.4" fill="none" stroke="#3caa5f" stroke-width="1.4"/><path d="M7.2 10.2L9.2 12L12.8 8.3" fill="none" stroke="#3caa5f" stroke-width="1.4"/></svg>
<div class="t" style="left:660.70px;top:516.89px;font-size:12.3px;color:#e8ecf0;-webkit-text-stroke:0.2px">1 day ago</div>
<svg class="a" style="left:783px;top:512px;" width="20" height="20" viewBox="0 0 20 20"><rect x="3.9" y="3.9" width="12.3" height="12.3" rx="0.6" fill="none" stroke="#92a4b3" stroke-width="1.8"/><path d="M3.9 8.4H16.2M7.9 8.4V16.2M12.2 8.4V16.2" stroke="#92a4b3" stroke-width="1.5"/></svg>
<div class="t" style="left:804.90px;top:515.79px;font-size:13.6px;color:#4299e0;-webkit-text-stroke:0.2px">dataset (db98bd58)</div>
<div class="a" style="left:928px;top:512px;width:35px;height:20px;background:#37424c;border-radius:4px"></div>
<div class="t" style="left:932.30px;top:517.14px;font-size:12px;color:#e8ecf0;-webkit-text-stroke:0.2px">Train</div>
<div class="t" style="left:1077.60px;top:516.72px;font-size:12.5px;color:#e8ecf0;-webkit-text-stroke:0.2px">2.5s</div>
<svg class="a" style="left:1152px;top:515px;" width="20" height="16" viewBox="0 0 20 16"><rect x="4.6" y="4.6" width="10.5" height="7.6" rx="0.8" fill="none" stroke="#8b9095" stroke-width="1"/><path d="M3.2 13.5H16.5" stroke="#8b9095" stroke-width="1.2"/></svg>
<div class="t" style="left:1172.40px;top:517.14px;font-size:12px;color:#e8ecf0;-webkit-text-stroke:0.2px">run_dep...</div>
<svg class="a" style="left:1250px;top:514px;" width="18" height="18" viewBox="0 0 18 18"><path d="M3.4 2.4H10L14.4 6.8V15.6Q14.4 16.6 13.4 16.6H4.4Q3.4 16.6 3.4 15.6V3.4Q3.4 2.4 4.4 2.4Z" fill="#707173"/><path d="M10.3 4V7H13.3Z" fill="#1a1b1d"/><circle cx="6.8" cy="9.6" r="1.55" fill="none" stroke="#11171d" stroke-width="1.3"/><circle cx="10.8" cy="13.3" r="1.55" fill="none" stroke="#11171d" stroke-width="1.3"/><path d="M8.2 11L9.4 12" stroke="#11171d" stroke-width="1.1"/></svg>
<div class="t" style="left:1269.00px;top:516.89px;font-size:12.3px;color:#2c80cd;-webkit-text-stroke:0.2px">sklearn</div>
<div class="a" style="left:340px;top:568px;width:1096px;height:1px;background:#2f3b45"></div>
<div class="a" style="left:348px;top:545px;width:16px;height:16px;border:1px solid #3d4b57;border-radius:3px"></div>
<svg class="a" style="left:381px;top:546px;" width="20" height="14" viewBox="0 0 20 14"><path d="M2.4 7C4.3 3.5 6.9 2.2 10 2.2C13.1 2.2 15.7 3.5 17.6 7C15.7 10.5 13.1 11.8 10 11.8C6.9 11.8 4.3 10.5 2.4 7Z" fill="none" stroke="#6d8091" stroke-width="1.3" stroke-linejoin="round"/><circle cx="10" cy="7" r="2.5" fill="none" stroke="#6d8091" stroke-width="1.3"/></svg>
<svg class="a" style="left:452px;top:545px;" width="16" height="16" viewBox="0 0 16 16"><circle cx="8" cy="8" r="6.1" fill="#c88bcf"/></svg>
<div class="t" style="left:474.10px;top:547.97px;font-size:12.2px;color:#2c80cd;-webkit-text-stroke:0.2px">continuous_deployment…</div>
<svg class="a" style="left:636px;top:543px;" width="20" height="20" viewBox="0 0 20 20"><circle cx="10" cy="10" r="6.4" fill="none" stroke="#3caa5f" stroke-width="1.4"/><path d="M7.2 10.2L9.2 12L12.8 8.3" fill="none" stroke="#3caa5f" stroke-width="1.4"/></svg>
<div class="t" style="left:660.70px;top:547.89px;font-size:12.3px;color:#e8ecf0;-webkit-text-stroke:0.2px">1 day ago</div>
<svg class="a" style="left:783px;top:543px;" width="20" height="20" viewBox="0 0 20 20"><rect x="3.9" y="3.9" width="12.3" height="12.3" rx="0.6" fill="none" stroke="#92a4b3" stroke-width="1.8"/><path d="M3.9 8.4H16.2M7.9 8.4V16.2M12.2 8.4V16.2" stroke="#92a4b3" stroke-width="1.5"/></svg>
<div class="t" style="left:804.90px;top:546.79px;font-size:13.6px;color:#4299e0;-webkit-text-stroke:0.2px">dataset (db98bd58)</div>
<div class="a" style="left:928px;top:543px;width:35px;height:20px;background:#37424c;border-radius:4px"></div>
<div class="t" style="left:932.30px;top:548.14px;font-size:12px;color:#e8ecf0;-webkit-text-stroke:0.2px">Train</div>
<div class="t" style="left:1077.60px;top:547.72px;font-size:12.5px;color:#e8ecf0;-webkit-text-stroke:0.2px">2.7s</div>
<svg class="a" style="left:1152px;top:546px;" width="20" height="16" viewBox="0 0 20 16"><rect x="4.6" y="4.6" width="10.5" height="7.6" rx="0.8" fill="none" stroke="#8b9095" stroke-width="1"/><path d="M3.2 13.5H16.5" stroke="#8b9095" stroke-width="1.2"/></svg>
<div class="t" style="left:1172.40px;top:548.14px;font-size:12px;color:#e8ecf0;-webkit-text-stroke:0.2px">run_dep...</div>
<svg class="a" style="left:1250px;top:545px;" width="18" height="18" viewBox="0 0 18 18"><path d="M3.4 2.4H10L14.4 6.8V15.6Q14.4 16.6 13.4 16.6H4.4Q3.4 16.6 3.4 15.6V3.4Q3.4 2.4 4.4 2.4Z" fill="#707173"/><path d="M10.3 4V7H13.3Z" fill="#1a1b1d"/><circle cx="6.8" cy="9.6" r="1.55" fill="none" stroke="#11171d" stroke-width="1.3"/><circle cx="10.8" cy="13.3" r="1.55" fill="none" stroke="#11171d" stroke-width="1.3"/><path d="M8.2 11L9.4 12" stroke="#11171d" stroke-width="1.1"/></svg>
<div class="t" style="left:1269.00px;top:547.89px;font-size:12.3px;color:#2c80cd;-webkit-text-stroke:0.2px">sklearn</div>
<div class="a" style="left:340px;top:599px;width:1096px;height:1px;background:#2f3b45"></div>
<div class="a" style="left:348px;top:576px;width:16px;height:16px;border:1px solid #3d4b57;border-radius:3px"></div>
<svg class="a" style="left:381px;top:577px;" width="20" height="14" viewBox="0 0 20 14"><path d="M2.4 7C4.3 3.5 6.9 2.2 10 2.2C13.1 2.2 15.7 3.5 17.6 7C15.7 10.5 13.1 11.8 10 11.8C6.9 11.8 4.3 10.5 2.4 7Z" fill="none" stroke="#6d8091" stroke-width="1.3" stroke-linejoin="round"/><circle cx="10" cy="7" r="2.5" fill="none" stroke="#6d8091" stroke-width="1.3"/></svg>
<svg class="a" style="left:452px;top:576px;" width="16" height="16" viewBox="0 0 16 16"><circle cx="8" cy="8" r="6.1" fill="#8b1a3a"/></svg>
<div class="t" style="left:474.10px;top:578.97px;font-size:12.2px;color:#2c80cd;-webkit-text-stroke:0.2px">continuous_deployment…</div>
<svg class="a" style="left:636px;top:574px;" width="20" height="20" viewBox="0 0 20 20"><circle cx="10" cy="10" r="6.4" fill="none" stroke="#3caa5f" stroke-width="1.4"/><path d="M7.2 10.2L9.2 12L12.8 8.3" fill="none" stroke="#3caa5f" stroke-width="1.4"/></svg>
<div class="t" style="left:660.70px;top:578.89px;font-size:12.3px;color:#e8ecf0;-webkit-text-stroke:0.2px">1 day ago</div>
<svg class="a" style="left:783px;top:574px;" width="20" height="20" viewBox="0 0 20 20"><rect x="3.9" y="3.9" width="12.3" height="12.3" rx="0.6" fill="none" stroke="#92a4b3" stroke-width="1.8"/><path d="M3.9 8.4H16.2M7.9 8.4V16.2M12.2 8.4V16.2" stroke="#92a4b3" stroke-width="1.5"/></svg>
<div class="t" style="left:804.90px;top:577.79px;font-size:13.6px;color:#4299e0;-webkit-text-stroke:0.2px">dataset (db98bd58)</div>
<div class="a" style="left:928px;top:574px;width:35px;height:20px;background:#37424c;border-radius:4px"></div>
<div class="t" style="left:932.30px;top:579.14px;font-size:12px;color:#e8ecf0;-webkit-text-stroke:0.2px">Train</div>
<div class="t" style="left:1077.60px;top:578.72px;font-size:12.5px;color:#e8ecf0;-webkit-text-stroke:0.2px">2.8s</div>
<svg class="a" style="left:1152px;top:577px;" width="20" height="16" viewBox="0 0 20 16"><rect x="4.6" y="4.6" width="10.5" height="7.6" rx="0.8" fill="none" stroke="#8b9095" stroke-width="1"/><path d="M3.2 13.5H16.5" stroke="#8b9095" stroke-width="1.2"/></svg>
<div class="t" style="left:1172.40px;top:579.14px;font-size:12px;color:#e8ecf0;-webkit-text-stroke:0.2px">run_dep...</div>
<svg class="a" style="left:1250px;top:576px;" width="18" height="18" viewBox="0 0 18 18"><path d="M3.4 2.4H10L14.4 6.8V15.6Q14.4 16.6 13.4 16.6H4.4Q3.4 16.6 3.4 15.6V3.4Q3.4 2.4 4.4 2.4Z" fill="#707173"/><path d="M10.3 4V7H13.3Z" fill="#1a1b1d"/><circle cx="6.8" cy="9.6" r="1.55" fill="none" stroke="#11171d" stroke-width="1.3"/><circle cx="10.8" cy="13.3" r="1.55" fill="none" stroke="#11171d" stroke-width="1.3"/><path d="M8.2 11L9.4 12" stroke="#11171d" stroke-width="1.1"/></svg>
<div class="t" style="left:1269.00px;top:578.89px;font-size:12.3px;color:#2c80cd;-webkit-text-stroke:0.2px">sklearn</div>
</body></html>
